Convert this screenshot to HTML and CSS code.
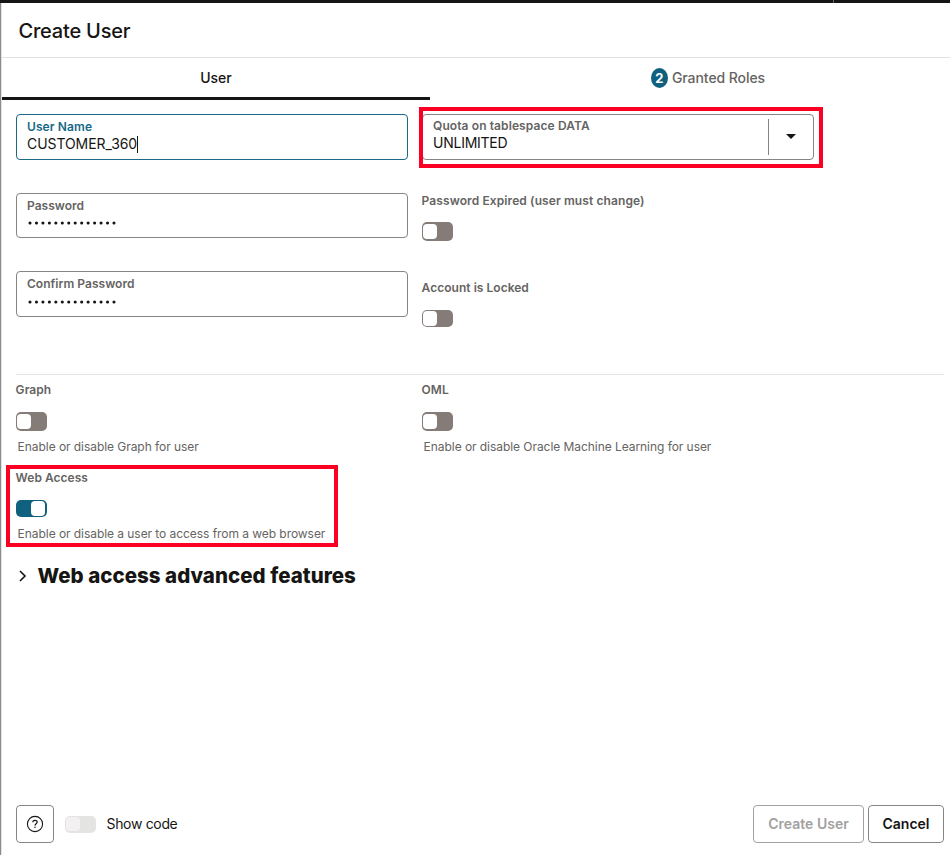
FILE: index.html
```html
<!DOCTYPE html>
<html lang="en">
<head>
<meta charset="utf-8">
<title>Create User</title>
<link rel="stylesheet" href="styles.css">
</head>
<body>
<div class="topbar"><span class="topbar-mark"></span></div>
<main class="panel">
  <header class="panel-header"><h1>Create User</h1></header>
  <nav class="tabs">
    <div class="tab active"><span>User</span></div>
    <div class="tab roles"><span class="badge">2</span><span>Granted Roles</span></div>
  </nav>
  <section class="form">
    <div class="column">
      <div class="field focused"><label>User Name</label><div class="value">CUSTOMER_360<i class="caret"></i></div></div>
      <div class="field password"><label>Password</label><div class="dots"><svg width="90" height="6"><path d="M3 3H88" /></svg></div></div>
      <div class="field confirm"><label>Confirm Password</label><div class="dots"><svg width="90" height="6"><path d="M3 3H88" /></svg></div></div>
    </div>
    <div class="column">
      <div class="field select">
        <div class="select-text"><label>Quota on tablespace DATA</label><div class="value">UNLIMITED</div></div>
        <div class="select-arrow"><svg width="10" height="5" viewBox="0 0 10 5"><path d="M0 0H10L5 5Z" fill="#161513"/></svg></div>
        <div class="highlight highlight-quota"></div>
      </div>
      <div class="option expired"><label>Password Expired (user must change)</label><span class="switch"></span></div>
      <div class="option locked"><label>Account is Locked</label><span class="switch short"></span></div>
    </div>
  </section>
  <section class="features">
    <div class="option"><label>Graph</label><span class="switch"></span><p class="hint">Enable or disable Graph for user</p></div>
    <div class="option"><label>OML</label><span class="switch"></span><p class="hint">Enable or disable Oracle Machine Learning for user</p></div>
    <div class="option web"><label>Web Access</label><span class="switch short on"></span><p class="hint">Enable or disable a user to access from a web browser</p><div class="highlight highlight-web"></div></div>
  </section>
  <section class="advanced">
    <svg width="8" height="12" viewBox="0 0 8 12" fill="none" stroke="#161513" stroke-width="1.6"><path d="M1 1L6 6L1 11"/></svg>
    <h2>Web access advanced features</h2>
  </section>
  <footer class="footer">
    <button class="button help"><svg width="18" height="18" viewBox="0 0 18 18" fill="none" stroke="#161513" stroke-width="1.1"><circle cx="9" cy="9" r="7.6"/><path d="M6.8 7.3C6.8 4.6 11.2 4.7 11.2 7.1C11.2 8.7 9 8.6 9 10.4" stroke-width="1.2"/><circle cx="9" cy="12.2" r=".75" fill="#161513" stroke="none"/></svg></button>
    <span class="switch short disabled"></span>
    <span class="show-code">Show code</span>
    <div class="actions">
      <button class="button create" disabled>Create User</button>
      <button class="button cancel">Cancel</button>
    </div>
  </footer>
</main>
</body>
</html>
```
FILE: styles.css
```css
* { box-sizing: border-box; }
body { margin: 0; width: 950px; height: 855px; overflow: hidden; display: flex; flex-direction: column; background: #fff; color: #161513; font-family: Inter, "Liberation Sans", sans-serif; }
h1, h2, p { margin: 0; }
.topbar { height: 3px; flex: none; background: #161513; padding-left: 833px; }
.topbar-mark { display: block; width: 1px; height: 3px; background: #666; }
.panel { flex: 1; display: flex; flex-direction: column; border-left: 1px solid #8b8b8b; box-shadow: inset 1px 0 #e4e4e4; padding-left: 1px; }
.panel-header { height: 55px; flex: none; border-bottom: 1px solid #e1e1e1; padding: 14px 0 0 16.5px; }
h1 { font-size: 20px; line-height: 28px; font-weight: 500; letter-spacing: -0.2px; }
.tabs { height: 42px; flex: none; display: flex; font-size: 14px; font-weight: 500; }
.tab { width: 428px; display: flex; justify-content: center; align-items: center; gap: 4px; }
.active { border-bottom: 3px solid #161513; }
.roles { flex: 1; color: #656462; padding: 0 0 3px 36px; letter-spacing: -0.07px; }
.badge { width: 17px; height: 20px; border-radius: 50%; background: #10617f; color: #fff; font-size: 13px; line-height: 20px; font-weight: 700; text-align: center; }
.form { height: 274px; flex: none; display: grid; grid-template-columns: 392px 392px; column-gap: 14px; padding: 14px 0 0 14px; }
.column { display: flex; flex-direction: column; }
.field { position: relative; height: 46px; border: 1px solid #878583; border-radius: 4px; padding: 4px 10px 0; }
label { display: block; font-size: 12px; line-height: 16px; font-weight: 600; color: #656462; letter-spacing: 0.03px; }
.focused label { letter-spacing: 0.1px; }
.value { display: flex; align-items: center; font-size: 14px; line-height: 18px; letter-spacing: -0.07px; }
.caret { width: 1px; height: 17px; background: #161513; }
.focused { border-color: #176987; }
.focused label { color: #176987; }
.password { height: 45px; margin-top: 33px; }
.confirm { margin-top: 33px; }
.dots { display: flex; height: 18px; align-items: center; }
.dots svg { stroke: #161513; stroke-width: 3.1; stroke-linecap: round; stroke-dasharray: 0 6.46; }
.confirm .dots { padding-top: 1px; }
.select { display: flex; padding: 3px 0 0 10px; }
.select label, .expired label { letter-spacing: 0.1px; }
.select .value { letter-spacing: -0.25px; }
.select-text { flex: 1; }
.select-arrow { width: 45px; height: 36px; margin-top: 1px; border-left: 1px solid #878583; display: flex; align-items: center; justify-content: center; padding: 0 1px 1px 0; }
.option { position: relative; }
.column .option { margin-left: -0.4px; }
.expired { margin-top: 33px; }
.locked { margin-top: 39px; }
.switch { display: block; width: 31px; height: 18.5px; padding: 2px 1px; border-radius: 5px; background: #857b77; margin-top: 13px; }
.switch::before { content: ""; display: block; width: 14px; height: 14.5px; border-radius: 4px; background: #fff; }
.short { height: 17.5px; margin-top: 14px; padding-top: 1.5px; }
.on { background: #10617f; }
.on::before { margin-left: 14px; width: 14.5px; }
.hint { font-size: 12px; line-height: 16px; color: #656462; padding-left: 2px; margin-top: 8.5px; letter-spacing: -0.055px; }
.features { height: 182px; flex: none; margin: 0 6px 0 14px; border-top: 1px solid #e4e4e4; padding-top: 7px; display: grid; grid-template-columns: 406px 1fr; grid-template-rows: 88px 80px; }
.features .option { margin-left: -0.4px; }
.features .switch { margin-top: 14px; }
.features .short { margin-top: 13.5px; }
.highlight { position: absolute; border: 4px solid #fb0023; }
.highlight-quota { left: -4px; top: -8px; width: 404px; height: 61px; }
.highlight-web { left: -9.6px; top: -5px; width: 332px; height: 82px; }
.advanced { display: flex; align-items: center; gap: 11px; height: 40px; padding-left: 17px; }
h2 { font-size: 20.5px; line-height: 28px; font-weight: 800; letter-spacing: 0.02px; margin-left: -0.5px; }
.footer { margin-top: auto; display: flex; align-items: center; padding: 0 6px 12px 14px; }
.button { height: 38px; border: 1px solid #878583; border-radius: 4px; background: #fff; color: #161513; font: 600 14px Inter, "Liberation Sans", sans-serif; padding: 0 0 2px; }
.help { width: 38px; display: flex; align-items: center; justify-content: center; padding: 0 1px 0 0; }
.disabled { background: #e4e4e2; margin: 0 0 0 11px; height: 17px; }
.disabled::before { background: #f3f1f2; height: 14px; }
.show-code { font-size: 14px; margin-left: 10.5px; padding-bottom: 2px; letter-spacing: -0.33px; }
.actions { margin-left: auto; display: flex; gap: 4px; }
.create { width: 111px; color: #a2a1a0; border-color: #a2a1a0; }
.cancel { width: 76px; }
```
